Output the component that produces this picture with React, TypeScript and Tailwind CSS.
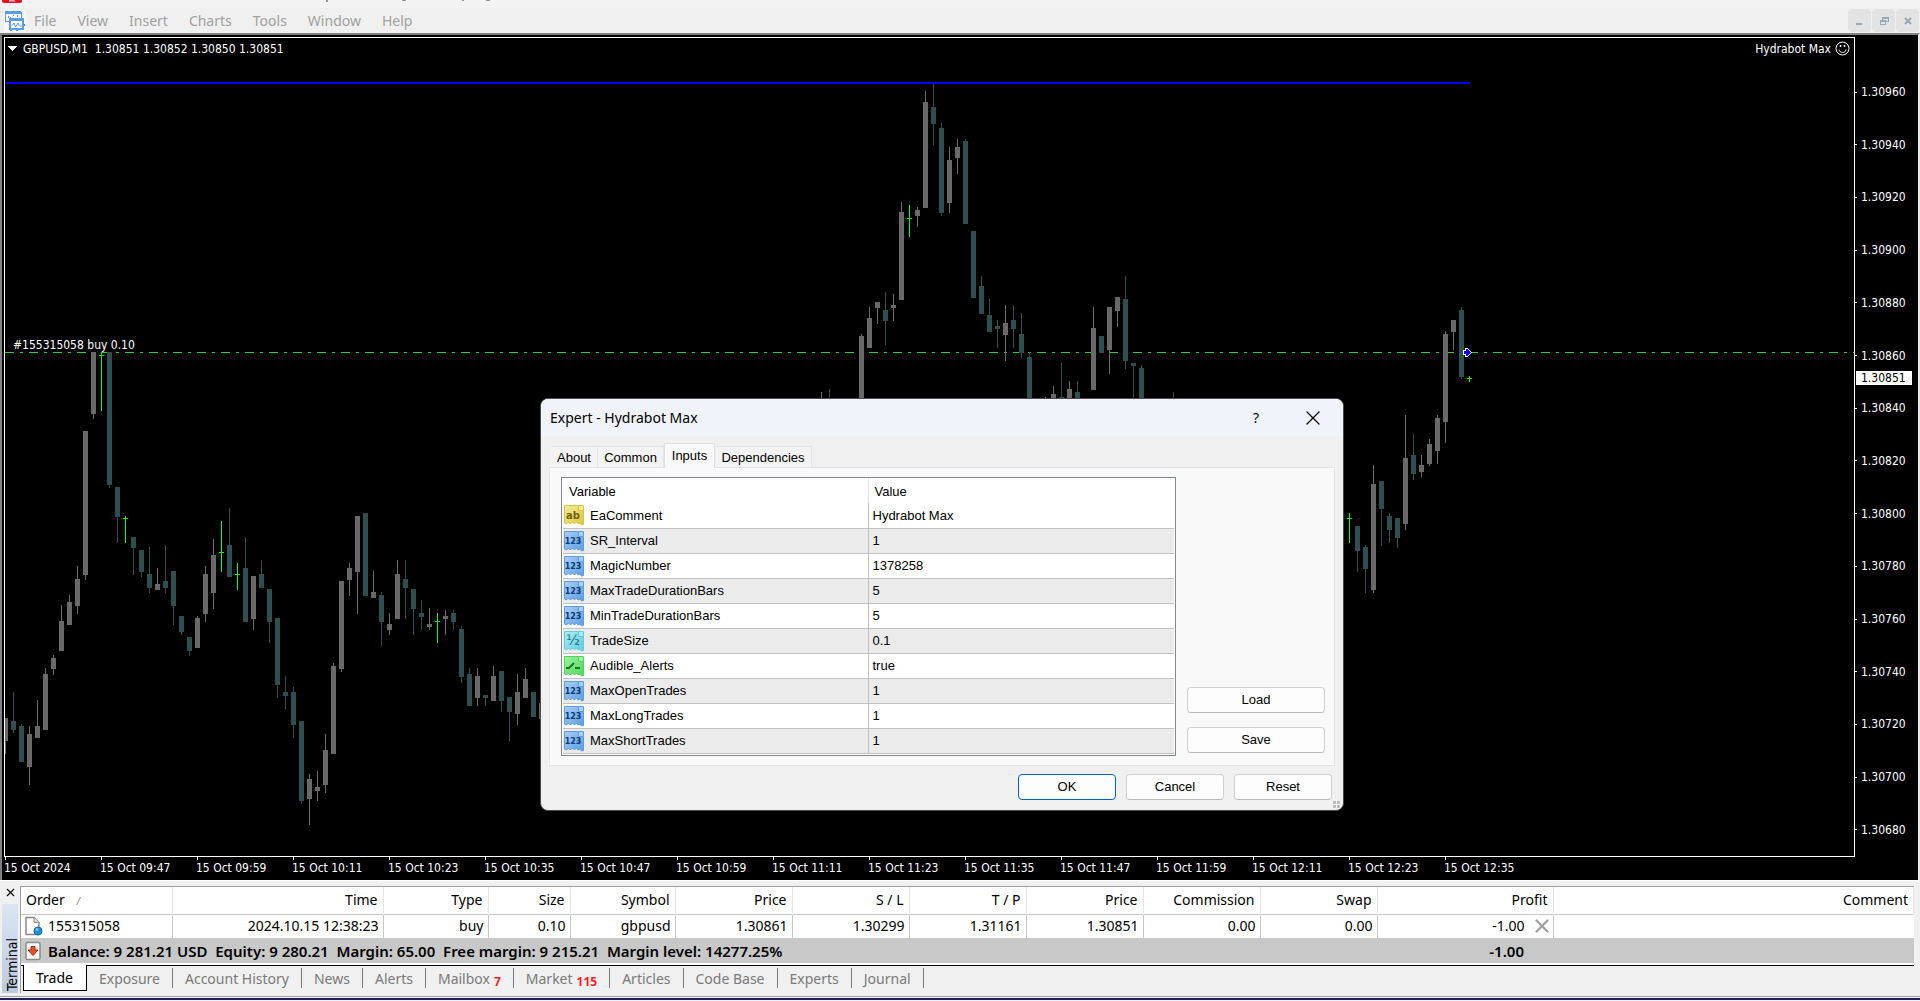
import { useState } from "react";
import { X } from "lucide-react";

type Candle = [index: number, kind: "up" | "down" | "doji", high: number, open: number, close: number, low: number];

// y values are window rows, the plot starts at row 38
const PLOT_TOP = 38;
const STEP = 8;

const COLORS = { up: "#696969", down: "#2f4f4f", doji: "#00ff00" };

const CANDLES: Candle[] = [
  [0, "up", 718, 718, 741, 754],
  [1, "down", 692, 721, 730, 733],
  [2, "down", 724, 726, 762, 762],
  [3, "up", 726, 734, 767, 785],
  [4, "up", 700, 726, 738, 738],
  [5, "up", 668, 674, 730, 730],
  [6, "up", 655, 658, 669, 675],
  [7, "up", 605, 621, 651, 651],
  [8, "up", 595, 602, 625, 625],
  [9, "up", 566, 579, 606, 614],
  [10, "up", 431, 431, 575, 580],
  [11, "up", 352, 352, 414, 419],
  [12, "doji", 352, 355, 355, 411],
  [13, "down", 352, 352, 485, 488],
  [14, "down", 487, 487, 517, 543],
  [15, "doji", 516, 518, 518, 543],
  [16, "down", 537, 537, 548, 575],
  [17, "down", 550, 550, 572, 577],
  [18, "down", 547, 574, 588, 593],
  [19, "up", 568, 584, 590, 590],
  [20, "down", 545, 581, 588, 593],
  [21, "down", 571, 571, 606, 625],
  [22, "down", 616, 616, 632, 635],
  [23, "down", 637, 637, 651, 656],
  [24, "up", 616, 618, 648, 648],
  [25, "up", 566, 574, 614, 622],
  [26, "up", 539, 555, 593, 609],
  [27, "doji", 521, 552, 552, 572],
  [28, "down", 508, 545, 577, 577],
  [29, "doji", 563, 574, 574, 590],
  [30, "down", 537, 568, 622, 622],
  [31, "up", 576, 576, 619, 630],
  [32, "down", 560, 574, 588, 588],
  [33, "down", 589, 589, 622, 643],
  [34, "down", 618, 618, 685, 698],
  [35, "down", 676, 692, 696, 709],
  [36, "down", 687, 692, 725, 738],
  [37, "down", 721, 721, 801, 804],
  [38, "up", 774, 779, 799, 825],
  [39, "up", 771, 787, 791, 801],
  [40, "up", 734, 750, 785, 793],
  [41, "up", 663, 666, 754, 754],
  [42, "up", 581, 581, 669, 672],
  [43, "up", 563, 568, 580, 596],
  [44, "up", 516, 516, 572, 614],
  [45, "down", 513, 513, 596, 596],
  [46, "up", 571, 592, 598, 598],
  [47, "down", 592, 595, 622, 646],
  [48, "up", 613, 624, 630, 635],
  [49, "up", 560, 574, 619, 619],
  [50, "down", 560, 579, 588, 619],
  [51, "down", 589, 589, 609, 635],
  [52, "down", 600, 613, 617, 630],
  [53, "up", 608, 624, 627, 630],
  [54, "doji", 613, 621, 621, 643],
  [55, "up", 610, 616, 619, 635],
  [56, "down", 610, 613, 622, 630],
  [57, "down", 626, 629, 677, 683],
  [58, "down", 668, 674, 706, 706],
  [59, "up", 668, 676, 698, 706],
  [60, "down", 695, 695, 698, 706],
  [61, "up", 666, 676, 701, 701],
  [62, "down", 671, 671, 701, 712],
  [63, "down", 697, 697, 712, 741],
  [64, "up", 674, 692, 714, 725],
  [65, "up", 668, 679, 698, 698],
  [66, "down", 692, 692, 717, 717],
  [67, "up", 703, 703, 719, 719],
  [102, "up", 392, 404, 420, 420],
  [103, "down", 389, 404, 420, 420],
  [107, "up", 334, 336, 410, 410],
  [108, "up", 307, 318, 348, 348],
  [109, "up", 302, 302, 308, 324],
  [110, "down", 292, 310, 321, 345],
  [111, "up", 294, 305, 308, 321],
  [112, "up", 202, 212, 300, 300],
  [113, "doji", 205, 218, 218, 237],
  [114, "up", 207, 210, 216, 227],
  [115, "up", 91, 102, 208, 208],
  [116, "down", 84, 107, 124, 145],
  [117, "down", 123, 128, 213, 216],
  [118, "up", 147, 160, 203, 213],
  [119, "up", 139, 147, 158, 174],
  [120, "down", 139, 141, 224, 224],
  [121, "down", 231, 231, 298, 298],
  [122, "down", 276, 286, 314, 314],
  [123, "down", 299, 315, 332, 332],
  [124, "down", 320, 326, 329, 348],
  [125, "up", 305, 323, 335, 361],
  [126, "down", 305, 320, 329, 348],
  [127, "down", 313, 334, 353, 358],
  [128, "down", 352, 357, 420, 420],
  [130, "up", 397, 404, 420, 420],
  [131, "up", 386, 394, 420, 420],
  [132, "down", 363, 397, 420, 420],
  [133, "up", 381, 389, 420, 420],
  [134, "down", 381, 392, 420, 420],
  [136, "up", 307, 328, 390, 390],
  [137, "down", 336, 336, 353, 353],
  [138, "up", 307, 307, 350, 374],
  [139, "up", 297, 297, 311, 327],
  [140, "down", 276, 299, 361, 369],
  [141, "down", 363, 363, 366, 410],
  [142, "down", 365, 368, 420, 420],
  [146, "down", 392, 410, 420, 420],
  [167, "up", 521, 521, 575, 575],
  [168, "doji", 513, 518, 518, 543],
  [169, "down", 526, 526, 551, 572],
  [170, "down", 545, 547, 569, 593],
  [171, "up", 465, 484, 590, 593],
  [172, "down", 481, 481, 509, 546],
  [173, "down", 513, 516, 530, 543],
  [174, "down", 518, 518, 538, 548],
  [175, "up", 415, 458, 524, 530],
  [176, "down", 434, 455, 474, 480],
  [177, "up", 455, 465, 472, 477],
  [178, "up", 439, 444, 464, 466],
  [179, "up", 415, 418, 451, 464],
  [180, "up", 331, 334, 422, 443],
  [181, "up", 320, 320, 332, 350],
  [182, "down", 307, 310, 377, 379],
  [183, "doji", 376, 378, 378, 382],
];

const PRICES = [
  "1.30960", "1.30940", "1.30920", "1.30900", "1.30880", "1.30860", "1.30840", "1.30820",
  "1.30800", "1.30780", "1.30760", "1.30740", "1.30720", "1.30700", "1.30680",
];

const TIMES = [
  "15 Oct 2024", "15 Oct 09:47", "15 Oct 09:59", "15 Oct 10:11", "15 Oct 10:23", "15 Oct 10:35",
  "15 Oct 10:47", "15 Oct 10:59", "15 Oct 11:11", "15 Oct 11:23", "15 Oct 11:35", "15 Oct 11:47",
  "15 Oct 11:59", "15 Oct 12:11", "15 Oct 12:23", "15 Oct 12:35",
];

const MENU = ["File", "View", "Insert", "Charts", "Tools", "Window", "Help"];

const DIALOG_TABS = [
  { label: "About", width: "w-[47px]" },
  { label: "Common", width: "w-[66px]" },
  { label: "Inputs", width: "w-[51px]" },
  { label: "Dependencies", width: "w-[97px]" },
];

type InputKind = "string" | "int" | "double" | "bool";

const INPUTS: { kind: InputKind; name: string; value: string }[] = [
  { kind: "string", name: "EaComment", value: "Hydrabot Max" },
  { kind: "int", name: "SR_Interval", value: "1" },
  { kind: "int", name: "MagicNumber", value: "1378258" },
  { kind: "int", name: "MaxTradeDurationBars", value: "5" },
  { kind: "int", name: "MinTradeDurationBars", value: "5" },
  { kind: "double", name: "TradeSize", value: "0.1" },
  { kind: "bool", name: "Audible_Alerts", value: "true" },
  { kind: "int", name: "MaxOpenTrades", value: "1" },
  { kind: "int", name: "MaxLongTrades", value: "1" },
  { kind: "int", name: "MaxShortTrades", value: "1" },
];

const COLUMNS = [
  { label: "Time", value: "2024.10.15 12:38:23", width: "w-[211px]" },
  { label: "Type", value: "buy", width: "w-[105px]" },
  { label: "Size", value: "0.10", width: "w-[82px]" },
  { label: "Symbol", value: "gbpusd", width: "w-[105px]" },
  { label: "Price", value: "1.30861", width: "w-[117px]" },
  { label: "S / L", value: "1.30299", width: "w-[117px]" },
  { label: "T / P", value: "1.31161", width: "w-[117px]" },
  { label: "Price", value: "1.30851", width: "w-[117px]" },
  { label: "Commission", value: "0.00", width: "w-[117px]" },
  { label: "Swap", value: "0.00", width: "w-[117px]" },
];

const TERMINAL_TABS: { label: string; count?: string }[] = [
  { label: "Trade" },
  { label: "Exposure" },
  { label: "Account History" },
  { label: "News" },
  { label: "Alerts" },
  { label: "Mailbox", count: "7" },
  { label: "Market", count: "115" },
  { label: "Articles" },
  { label: "Code Base" },
  { label: "Experts" },
  { label: "Journal" },
];

function ChartsIcon() {
  return (
    <svg width="22" height="22" viewBox="0 0 22 22" shapeRendering="crispEdges">
      <rect width="22" height="22" fill="#f9f9f9" />
      <path d="M1 1h16v3H1z" fill="#5b9bf8" />
      <path d="M1.500 3v9M1 11.500h5M17.500 2v6" stroke="#5b9bf8" fill="none" />
      <path d="M4 8v-2M6.500 7v2M9 5.500h1M13.500 5v2" stroke="#5b9bf8" strokeWidth="1" fill="none" />
      <rect x="5" y="8" width="15" height="12" fill="#5b9bf8" />
      <rect x="7" y="11" width="11" height="7" fill="#fff" />
      <path d="M8 15.500l2-2.500 1.500 4 2.500-4 1.500 3h2" stroke="#5b9bf8" strokeWidth="1" fill="none" shapeRendering="auto" />
      <path d="M2 1h2M8 1h2M14 1h2M20 14v2M6 20h2M12 20h2" stroke="#2fb46a" strokeWidth="1" />
    </svg>
  );
}

const KIND_COLORS: Record<InputKind, { light: string; dark: string; ink: string }> = {
  string: { light: "#f6ec9a", dark: "#d9c440", ink: "#6e6206" },
  int: { light: "#a9d0f8", dark: "#5d9ce0", ink: "#0d3b73" },
  double: { light: "#a8eef5", dark: "#63cbdc", ink: "#1d7482" },
  bool: { light: "#9ff3a2", dark: "#4fd45a", ink: "#127a22" },
};

const KIND_TEXT: Record<InputKind, string> = { string: "ab", int: "123", double: "½", bool: "" };

function KindIcon({ kind }: { kind: InputKind }) {
  const c = KIND_COLORS[kind];
  return (
    <svg width="22" height="22" viewBox="0 0 22 22" className="shrink-0">
      <defs>
        <linearGradient id={`kind-${kind}`} x1="0" y1="0" x2="1" y2="1">
          <stop offset="0" stopColor={c.light} />
          <stop offset="1" stopColor={c.dark} />
        </linearGradient>
      </defs>
      <path
        d="M1.500 1.500h14l5 4v15l-2 .5-1.500-2-2 1-1.500-2-2 2-2-2-2 2-2-2-2 2-2-1z"
        fill={`url(#kind-${kind})`}
        stroke={c.dark}
      />
      <path d="M15.500 1.500h5v5h-5z" fill={c.light} stroke={c.dark} />
      {kind === "bool" ? (
        <path d="M3 13h3l5-5M12 13h5" stroke={c.ink} strokeWidth="2" fill="none" />
      ) : (
        <text
          x="10"
          y={kind === "int" ? 14 : 15}
          textAnchor="middle"
          fontFamily="'DejaVu Sans'"
          fontWeight={kind === "double" ? "400" : "700"}
          fontSize={kind === "int" ? 8 : kind === "double" ? 14 : 10}
          fill={c.ink}
        >
          {KIND_TEXT[kind]}
        </text>
      )}
    </svg>
  );
}

function OrderIcon() {
  return (
    <svg width="20" height="20" viewBox="0 0 20 20" className="shrink-0">
      <path d="M2 1.500h8l5 5v12h-13z" fill="#fdfdfd" stroke="#8a8a8a" strokeWidth="1.500" />
      <path d="M10 1.500v5h5" fill="#ddd" stroke="#8a8a8a" />
      <circle cx="14" cy="15" r="4" fill="#1e90d8" stroke="#0f6cae" />
      <circle cx="13" cy="13.500" r="1.300" fill="#8fd0f7" />
    </svg>
  );
}

function BalanceIcon() {
  return (
    <svg width="20" height="20" viewBox="0 0 20 20" className="shrink-0">
      <rect x="2" y="1.500" width="14" height="17" rx="1.500" fill="#fbfbfb" stroke="#8a8a8a" strokeWidth="1.500" />
      <path d="M7 5.500h4v3.500h3l-5 5.500-5-5.500h3z" fill="#e8502a" stroke="#a92a10" />
    </svg>
  );
}

function CandleShape({ candle }: { candle: Candle }) {
  const [i, kind, high, open, close, low] = candle;
  const x = i * STEP;
  const fill = COLORS[kind];
  return (
    <g fill={fill}>
      <rect x={x} y={high - PLOT_TOP} width={1} height={Math.max(low - high, 1)} />
      <rect x={x - 2} y={open - PLOT_TOP} width={5} height={Math.max(close - open, 1)} />
    </g>
  );
}

function Chart() {
  return (
    <section className="border-t-2 border-r-2 border-l-2 border-[#808080] border-r-[#e8e8e8] bg-black pt-[2px] pl-[2px] font-['DejaVu_Sans_Condensed','DejaVu_Sans',sans-serif] text-[12px] text-white">
      <div className="flex">
        <div className="relative min-w-0 flex-1 border border-white">
          <svg className="block h-[818px] w-full" shapeRendering="crispEdges">
            <line x1="0" y1="314.5" x2="100%" y2="314.5" stroke="#32cd32" strokeDasharray="9 6 3 6" />
            {CANDLES.map((c) => (
              <CandleShape key={c[0]} candle={c} />
            ))}
            <rect x="0" y="44" width="1465" height="2" fill="#0000ff" />
            <path d="M1458.500 312.500h2v-2h2l4 4-4 4h-2v-2h-2z" fill="#0000ff" stroke="#fff" />
          </svg>
          <div className="absolute inset-x-0 top-0 flex items-center justify-between pt-[3px] pr-1 pl-[3px] leading-[14px]">
            <div className="flex items-center gap-[6px]">
              <svg width="9" height="5" viewBox="0 0 9 5" shapeRendering="crispEdges">
                <path d="M0 0h9l-4.500 5z" fill="#fff" />
              </svg>
              <span className="whitespace-pre">GBPUSD,M1  1.30851 1.30852 1.30850 1.30851</span>
            </div>
            <div className="flex items-center gap-1">
              <span>Hydrabot Max</span>
              <svg width="15" height="15" viewBox="0 0 15 15" fill="none" stroke="#fff">
                <circle cx="7.500" cy="7.500" r="6.500" />
                <path d="M4 8.500c.5 4 6.500 4 7 0" />
                <path d="M5.500 4v2M9.500 4v2" strokeWidth="1.500" />
              </svg>
            </div>
          </div>
          <span className="absolute top-[300px] left-2 leading-[14px]">#155315058 buy 0.10</span>
        </div>
        <div className="relative flex w-[63px] flex-col justify-between pt-[49px] pb-[21px]">
          {PRICES.map((p) => (
            <div key={p} className="flex items-center gap-1 leading-3">
              <span className="h-px w-[2px] bg-white" />
              {p}
            </div>
          ))}
          <div className="absolute top-[334px] left-px w-14 bg-white pl-[5px] leading-[14px] text-black">1.30851</div>
        </div>
      </div>
      <div className="flex h-[23px] overflow-hidden">
        {TIMES.map((t) => (
          <div key={t} className="w-24 shrink-0">
            <div className="ml-px h-[3px] w-px bg-white" />
            <div className="leading-4 whitespace-nowrap">{t}</div>
          </div>
        ))}
      </div>
    </section>
  );
}

function DialogButton({ label, primary, wide }: { label: string; primary?: boolean; wide?: boolean }) {
  return (
    <button
      type="button"
      className={`h-[26px] rounded-[4px] border bg-[#fdfdfd] text-[13px] ${
        primary ? "border-[#0067c0]" : "border-[#d0d0d0] border-b-[#bbbbbb]"
      } ${wide ? "w-full" : "w-[98px]"}`}
    >
      {label}
    </button>
  );
}

function ExpertDialog() {
  const [tab, setTab] = useState("Inputs");
  return (
    <div
      role="dialog"
      aria-labelledby="expert-title"
      className="absolute top-[398px] left-[540px] w-[804px] overflow-hidden rounded-lg border border-[#4a4a4a] bg-[#f0f0f0] font-['Liberation_Sans',sans-serif] text-[13px] text-black"
    >
      <div className="flex h-[37px] items-center bg-[#f0f3f9] pr-[18px] pl-[9px] font-['Noto_Sans',sans-serif]">
        <h2 id="expert-title" className="flex-1 text-[14px]">Expert - Hydrabot Max</h2>
        <button type="button" className="mr-[42px] text-[14px]">?</button>
        <button type="button" aria-label="Close">
          <X size={24} strokeWidth={1.25} />
        </button>
      </div>
      <div className="px-2 pt-[7px] pb-[10px]">
        <div className="flex items-end pl-[2px]">
          {DIALOG_TABS.map((t) => (
            <button
              key={t.label}
              type="button"
              onClick={() => setTab(t.label)}
              className={`${t.width} ${
                t.label === tab
                  ? "relative -mb-px h-[25px] border border-b-0 border-[#dfdfdf] bg-[#f9f9f9] pb-px"
                  : "h-[21px] border-t border-r border-[#e3e3e3] bg-[#f3f3f3] pt-px"
              }`}
            >
              {t.label}
            </button>
          ))}
        </div>
        <div className="flex gap-[11px] border border-[#e3e3e3] bg-[#f9f9f9] py-[9px] pr-[9px] pl-[11px]">
          <div className="min-w-0 flex-1 border border-[#828790] bg-white px-px pb-px">
            <table className="w-full table-fixed border-collapse">
              <thead>
                <tr className="h-[25px]">
                  <th className="w-[305px] border-r border-[#e5e5e5] p-0 pt-[2px] pl-[6px] text-left font-normal">Variable</th>
                  <th className="p-0 pt-[2px] pl-[6px] text-left font-normal">Value</th>
                </tr>
              </thead>
              <tbody>
                {INPUTS.map((row, i) => (
                  <tr key={row.name} className={`h-[25px] border-b border-[#c0c0c0] ${i % 2 ? "bg-[#ebebeb]" : ""}`}>
                    <td className="border-r border-[#c0c0c0] p-0">
                      <div className="flex items-center gap-[5px]">
                        <KindIcon kind={row.kind} />
                        {row.name}
                      </div>
                    </td>
                    <td className="p-0 pl-1">{row.value}</td>
                  </tr>
                ))}
              </tbody>
            </table>
          </div>
          <div className="flex w-[138px] flex-col justify-end gap-[14px] pb-[3px]">
            <DialogButton label="Load" wide />
            <DialogButton label="Save" wide />
          </div>
        </div>
        <div className="mt-2 flex justify-end gap-[10px] pr-[3px]">
          <DialogButton label="OK" primary />
          <DialogButton label="Cancel" />
          <DialogButton label="Reset" />
        </div>
      </div>
      <svg className="absolute right-[3px] bottom-[2px]" width="7" height="7" viewBox="0 0 7 7" fill="#bdbdbd">
        <path d="M0 0h3v3h-3zM4 0h3v3h-3zM0 4h3v3h-3zM4 4h3v3h-3z" />
      </svg>
    </div>
  );
}

function TitleEdge() {
  return (
    <div className="h-2 bg-[#f3f3f3]">
      <svg width="520" height="8" viewBox="0 0 520 8">
        <path d="M2 0h20v1q0 2-2 2h-16q-2 0-2-2z" fill="#e81123" />
        <path d="M9 0h5l2 1.500h-7z" fill="#f9a6ac" />
        <path d="M327 0v2M463 0v1" stroke="#777" strokeWidth="1.500" />
        <path d="M402 0q2 1 4 0M486 0q2 1 4 0" stroke="#777" fill="none" />
      </svg>
    </div>
  );
}

function MenuBar() {
  return (
    <header className="flex h-[25px] items-center justify-between bg-[#f0f0f0]">
      <div className="flex items-center pl-1">
        <ChartsIcon />
        <nav className="flex gap-[21px] pl-2 font-['Noto_Sans',sans-serif] text-[14px] text-[#a0a0a0]">
          {MENU.map((m) => (
            <button key={m} type="button">{m}</button>
          ))}
        </nav>
      </div>
      <div className="flex gap-px pr-px">
        <button type="button" aria-label="Minimize" className="flex h-[23px] w-[23px] items-center justify-center rounded-sm bg-[#e3e3e3]">
          <svg width="10" height="10" shapeRendering="crispEdges"><path d="M1 7h6v2h-6z" fill="#9aa7b5" /></svg>
        </button>
        <button type="button" aria-label="Restore" className="flex h-[23px] w-[23px] items-center justify-center rounded-sm bg-[#e3e3e3]">
          <svg width="10" height="10" shapeRendering="crispEdges" fill="none" stroke="#9aa7b5">
            <path d="M1.500 4.500h5v4h-5zM1 5h6M3 1.500h6v4h-2M3 2h6v-1M3.500 1v3" />
          </svg>
        </button>
        <button type="button" aria-label="Close chart" className="flex h-[23px] w-[23px] items-center justify-center rounded-sm bg-[#e3e3e3]">
          <svg width="10" height="10"><path d="M2 2l6 6M8 2l-6 6" stroke="#9aa7b5" strokeWidth="2" /></svg>
        </button>
      </div>
    </header>
  );
}

function Terminal() {
  const [tab, setTab] = useState("Trade");
  return (
    <section className="flex border-t border-white bg-[#f0f0f0] pt-[5px] pr-[6px] font-['Noto_Sans',sans-serif] text-[14px] text-black">
      <div className="flex w-5 flex-col items-center">
        <button type="button" aria-label="Close terminal" className="mb-[5px]">
          <X size={13} strokeWidth={2} />
        </button>
        <div className="flex w-4 flex-1 items-center bg-linear-to-b from-[#dbe6f2] to-[#bccadd] pb-[2px] pl-[3px] [writing-mode:vertical-rl]">
          <span className="mt-auto rotate-180 font-['DejaVu_Sans_Condensed','DejaVu_Sans',sans-serif] text-[14px] leading-4">
            Terminal
          </span>
        </div>
      </div>
      <div className="min-w-0 flex-1 border-t border-l border-[#a0a0a0] bg-white">
        <table className="w-full table-fixed border-collapse bg-white leading-5">
          <thead>
            <tr className="h-[27px] border-b border-[#c8c8c8]">
              <th className="w-[151px] border-r border-[#e5e5e5] p-0 pl-[5px] text-left font-normal">
                Order <span className="pl-2 text-[10px] text-[#808080] italic">/</span>
              </th>
              {COLUMNS.map((c, i) => (
                <th key={i} className={`border-r border-[#e5e5e5] p-0 pr-[5px] text-right font-normal ${c.width}`}>
                  {c.label}
                </th>
              ))}
              <th className="w-[176px] border-r border-[#e5e5e5] p-0 pr-[5px] text-right font-normal">Profit</th>
              <th className="border-r border-[#e5e5e5] p-0 pr-[5px] text-right font-normal">Comment</th>
            </tr>
          </thead>
          <tbody>
            <tr className="h-6">
              <td className="border-r border-[#c8c8c8] p-0">
                <div className="flex items-center gap-1 pl-[3px]">
                  <OrderIcon />
                  155315058
                </div>
              </td>
              {COLUMNS.map((c, i) => (
                <td key={i} className="border-r border-[#c8c8c8] p-0 pr-1 text-right">{c.value}</td>
              ))}
              <td className="border-r border-[#c8c8c8] p-0">
                <div className="flex items-center justify-end gap-[6px]">
                  -1.00
                  <button type="button" aria-label="Close order">
                    <X size={22} strokeWidth={2.5} color="#a0a0a0" />
                  </button>
                </div>
              </td>
              <td />
            </tr>
            <tr className="h-[25px] bg-[#c8c8c8] text-[15px] font-semibold">
              <td colSpan={11} className="p-0">
                <div className="flex items-center gap-1 pl-[3px]">
                  <BalanceIcon />
                  <span className="whitespace-pre">
                    {"Balance: 9 281.21 USD  Equity: 9 280.21  Margin: 65.00  Free margin: 9 215.21  Margin level: 14277.25%"}
                  </span>
                </div>
              </td>
              <td className="p-0 pr-[29px] text-right">-1.00</td>
              <td />
            </tr>
          </tbody>
        </table>
        <div className="mt-[2px] flex h-[28px] items-start border-t border-black bg-[#f0f0f0] pl-[2px] text-[#7a7a7a]">
          {TERMINAL_TABS.map((t) => (
            <button
              key={t.label}
              type="button"
              onClick={() => setTab(t.label)}
              className={
                t.label === tab
                  ? "-mt-px h-[26px] border border-t-0 border-black bg-white pr-[13px] pl-3 text-black"
                  : "mt-[2px] flex h-5 items-center border-r border-[#7a7a7a] px-3 whitespace-nowrap"
              }
            >
              {t.label}
              {t.count && <span className="pt-2 pl-1 text-[12px] font-bold text-[#f01e28]">{t.count}</span>}
            </button>
          ))}
        </div>
      </div>
    </section>
  );
}

export default function App() {
  return (
    <main className="relative min-h-screen overflow-hidden bg-[#f0f0f0]">
      <TitleEdge />
      <MenuBar />
      <Chart />
      <Terminal />
      <div className="mt-[3px] h-px bg-[#a0a0a0]" />
      <div className="mt-px h-[2px] bg-[#1f1f5c]" />
      <ExpertDialog />
    </main>
  );
}
